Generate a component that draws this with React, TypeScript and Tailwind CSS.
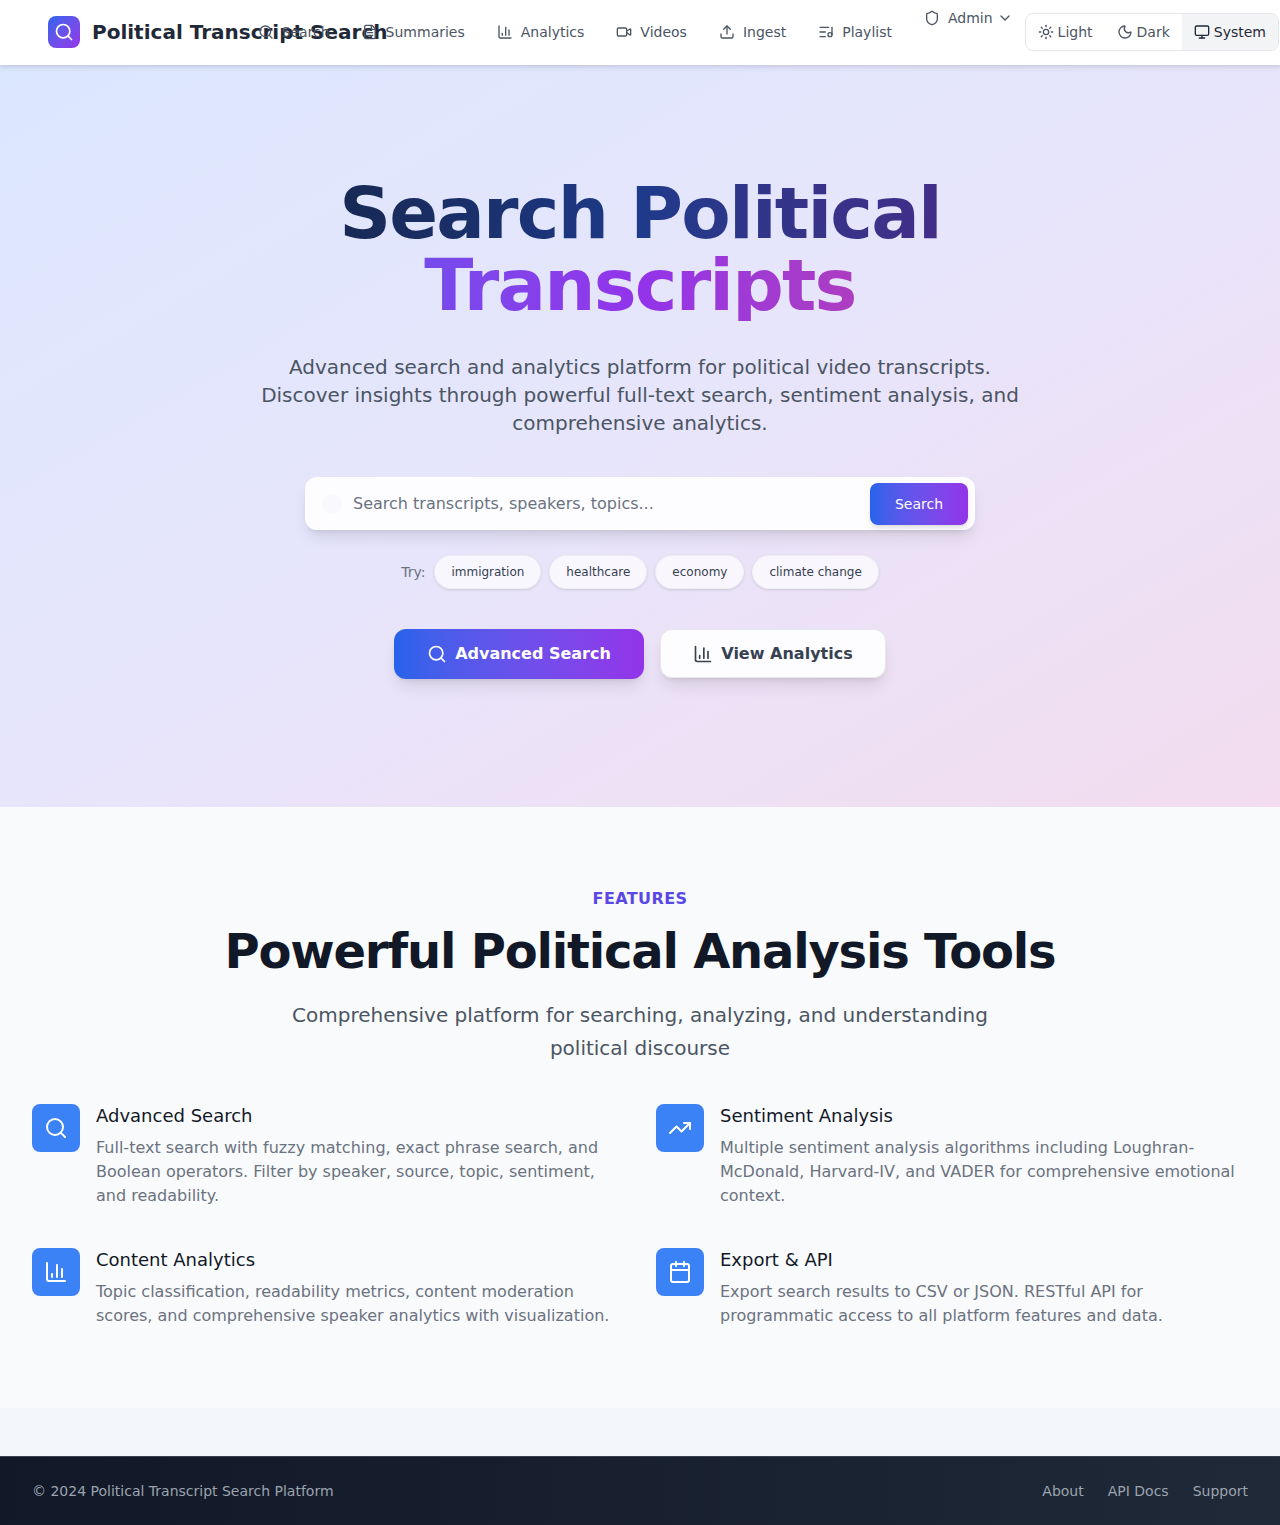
import { BarChart3, Calendar, ChevronDown, FileText, ListMusic, Monitor, Moon, Search, Shield, Sun, TrendingUp, Upload, Video } from "lucide-react";

const NAV_LINKS = [
  { label: "Search", icon: Search },
  { label: "Summaries", icon: FileText },
  { label: "Analytics", icon: BarChart3 },
  { label: "Videos", icon: Video },
  { label: "Ingest", icon: Upload },
  { label: "Playlist", icon: ListMusic },
];

const THEMES = [
  { label: "Light", icon: Sun, active: false },
  { label: "Dark", icon: Moon, active: false },
  { label: "System", icon: Monitor, active: true },
];

const SUGGESTIONS = ["immigration", "healthcare", "economy", "climate change"];

const FEATURES = [
  {
    title: "Advanced Search",
    icon: Search,
    text: "Full-text search with fuzzy matching, exact phrase search, and Boolean operators. Filter by speaker, source, topic, sentiment, and readability.",
  },
  {
    title: "Sentiment Analysis",
    icon: TrendingUp,
    text: "Multiple sentiment analysis algorithms including Loughran-McDonald, Harvard-IV, and VADER for comprehensive emotional context.",
  },
  {
    title: "Content Analytics",
    icon: BarChart3,
    text: "Topic classification, readability metrics, content moderation scores, and comprehensive speaker analytics with visualization.",
  },
  {
    title: "Export & API",
    icon: Calendar,
    text: "Export search results to CSV or JSON. RESTful API for programmatic access to all platform features and data.",
  },
];

function Header() {
  return (
    <header className="relative z-10 flex h-[65px] items-start bg-white shadow-[0_1px_3px_rgba(0,0,0,0.1),0_4px_6px_rgba(0,0,0,0.05)]">
      {/* Logo overflows its box and the nav draws over it, as in the reference */}
      <div className="ml-12 mt-4 flex h-8 w-[209.5px] shrink-0 items-center gap-3 whitespace-nowrap">
        <span className="flex h-8 w-8 shrink-0 items-center justify-center rounded-lg bg-gradient-to-br from-[#2563eb] to-[#9333ea] text-white">
          <Search size={20} />
        </span>
        <span className="text-xl leading-8 font-bold text-[#1f2937]">Political Transcript Search</span>
      </div>

      <nav className="mt-[22px] flex items-center gap-8 text-sm text-[#4b5563]">
        {NAV_LINKS.map(({ label, icon: Icon }) => (
          <a key={label} className="flex h-5 items-center gap-2 whitespace-nowrap">
            <Icon size={16} />
            {label}
          </a>
        ))}
      </nav>

      <div className="ml-8 mt-2 flex h-5 items-center text-sm text-[#4b5563]">
        <Shield size={16} className="mr-2" />
        Admin
        <ChevronDown size={16} className="ml-1" />
      </div>

      <div className="ml-3 mt-[13px] flex h-[38px] overflow-hidden rounded-lg border border-[#e5e7eb] bg-white text-sm text-[#4b5563]">
        {THEMES.map(({ label, icon: Icon, active }) => (
          <span
            key={label}
            className={`flex items-center gap-1 px-3 ${active ? "bg-[#f3f4f6] text-[#1f2937]" : ""}`}
          >
            <Icon size={16} />
            {label}
          </span>
        ))}
      </div>
    </header>
  );
}

function Hero() {
  return (
    <section className="flex h-[742px] flex-col items-center bg-gradient-to-br from-[#dbe7fe] via-[#e7e5fb] to-[#f3dcef] pt-28">
      <h1 className="w-[1152px] text-center text-[72px] leading-[72px] font-bold tracking-tight">
        <span className="block bg-gradient-to-r from-[#111827] via-[#1e3a8a] to-[#581c87] bg-clip-text text-transparent">Search Political</span>
        <span className="block bg-gradient-to-r from-[#2563eb] via-[#9333ea] to-[#db2777] bg-clip-text text-transparent">Transcripts</span>
      </h1>
      <p className="mt-8 w-[768px] text-center text-xl leading-7 text-[#4b5563]">
        Advanced search and analytics platform for political video transcripts. Discover insights through powerful full-text search, sentiment analysis, and comprehensive analytics.
      </p>

      <div className="mt-10 flex h-[53px] w-[670px] items-center rounded-xl border border-white/40 bg-white/90 pr-[6px] pl-4 shadow-[0_10px_15px_-3px_rgba(0,0,0,0.1),0_4px_6px_-4px_rgba(0,0,0,0.1)]">
        <span className="mr-[11px] h-5 w-5 rounded-full bg-[#f9f8fe]" />
        <span className="flex-1 text-base text-[#6b7280]">Search transcripts, speakers, topics...</span>
        <button className="h-[42px] w-[98px] rounded-lg bg-gradient-to-r from-[#2563eb] to-[#9333ea] text-sm text-white shadow-md">Search</button>
      </div>

      <div className="mt-[25px] flex items-center gap-2">
        <span className="mr-px text-sm text-[#6b7280]">Try:</span>
        {SUGGESTIONS.map((s) => (
          <span key={s} className="flex h-[34px] items-center rounded-full border border-[#e5e7eb]/60 bg-white/70 px-4 text-xs text-[#374151] shadow-sm">
            {s}
          </span>
        ))}
      </div>

      <div className="mt-10 flex gap-4">
        <a className="flex h-[50px] w-[250px] items-center justify-center gap-2 rounded-xl bg-gradient-to-r from-[#2563eb] to-[#9333ea] text-base font-semibold text-white shadow-lg">
          <Search size={20} />
          Advanced Search
        </a>
        <a className="flex h-[49px] w-[226px] items-center justify-center gap-2 rounded-xl border border-[#e5e7eb] bg-white/90 text-base font-semibold text-[#374151] shadow-lg">
          <BarChart3 size={20} />
          View Analytics
        </a>
      </div>
    </section>
  );
}

function Features() {
  return (
    <section className="h-[601px] bg-[#f9fafb] px-8 pt-20">
      <div className="text-center">
        <p className="text-base leading-6 font-semibold tracking-wide text-[#5a48e6]">FEATURES</p>
        <h2 className="mt-4 text-5xl leading-[48px] font-bold tracking-tight text-[#111827]">Powerful Political Analysis Tools</h2>
        <p className="mx-auto mt-6 w-[768px] text-xl leading-[33px] text-[#4b5563]">
          Comprehensive platform for searching, analyzing, and understanding political discourse
        </p>
      </div>
      <div className="mt-[39px] grid grid-cols-2 gap-x-8 gap-y-10">
        {FEATURES.map(({ title, icon: Icon, text }) => (
          <div key={title} className="flex gap-4">
            <span className="flex h-12 w-12 shrink-0 items-center justify-center rounded-lg bg-[#3b82f6] text-white">
              <Icon size={24} />
            </span>
            <div>
              <h3 className="text-lg leading-6 font-medium text-[#111827]">{title}</h3>
              <p className="mt-2 text-base leading-6 text-[#6b7280]">{text}</p>
            </div>
          </div>
        ))}
      </div>
    </section>
  );
}

function Footer() {
  return (
    <footer className="flex h-[69px] items-center justify-between border-t border-[#374151] bg-gradient-to-r from-[#111827] to-[#1f2937] px-8 text-sm text-[#9ca3af]">
      <span>© 2024 Political Transcript Search Platform</span>
      <div className="flex gap-6">
        <a>About</a>
        <a>API Docs</a>
        <a>Support</a>
      </div>
    </footer>
  );
}

export default function App() {
  return (
    <div className="min-h-screen bg-[#f3f6fa] font-['DejaVu_Sans',sans-serif]">
      <Header />
      <Hero />
      <Features />
      <div className="h-12" />
      <Footer />
    </div>
  );
}
